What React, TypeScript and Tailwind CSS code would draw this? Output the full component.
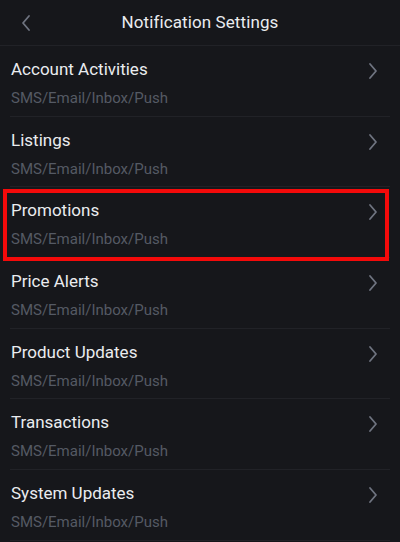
const items = [
  "Account Activities",
  "Listings",
  "Promotions",
  "Price Alerts",
  "Product Updates",
  "Transactions",
  "System Updates",
]

function Chevron({ dir, className }: { dir: "left" | "right"; className?: string }) {
  return (
    <svg viewBox="0 0 10 18" className={className} fill="none" stroke="currentColor" strokeWidth={1.8} strokeLinecap="round" strokeLinejoin="round">
      {dir === "right" ? <polyline points="2,2 8,9 2,16" /> : <polyline points="8,2 2,9 8,16" />}
    </svg>
  )
}

export default function App() {
  return (
    <div
      className="w-[400px] h-[542px] overflow-hidden bg-[#16171b] text-[#eaecef]"
      style={{ fontFamily: "Roboto, 'Noto Sans', sans-serif" }}
    >
      <div className="h-[46px] flex items-center border-b border-[#212227] px-[21px]">
        <Chevron dir="left" className="w-[10px] h-[18px] text-[#6f7480]" />
        <span className="flex-1 text-center text-[17px] tracking-[0.1px] pr-[10px]">Notification Settings</span>
      </div>

      {items.map((title) => (
        <div key={title} className="relative h-[70.67px] px-[11px]">
          <div className="flex items-center justify-between pt-[12px]">
            <span className="text-[17px] leading-[22px]">{title}</span>
            <Chevron dir="right" className="w-[10px] h-[18px] mr-[11px] mt-[4px] text-[#6f7480]" />
          </div>
          <div className="mt-[8px] text-[15px] leading-[20px] text-[#555a64]">SMS/Email/Inbox/Push</div>
          <div className="absolute left-[10px] right-[10px] bottom-0 h-px bg-[#212227]" />
          {title === "Promotions" && (
            <div className="absolute left-[3px] right-[11px] top-[2px] bottom-[-3px] border-[4px] border-[#f40a0a]" />
          )}
        </div>
      ))}
    </div>
  )
}
